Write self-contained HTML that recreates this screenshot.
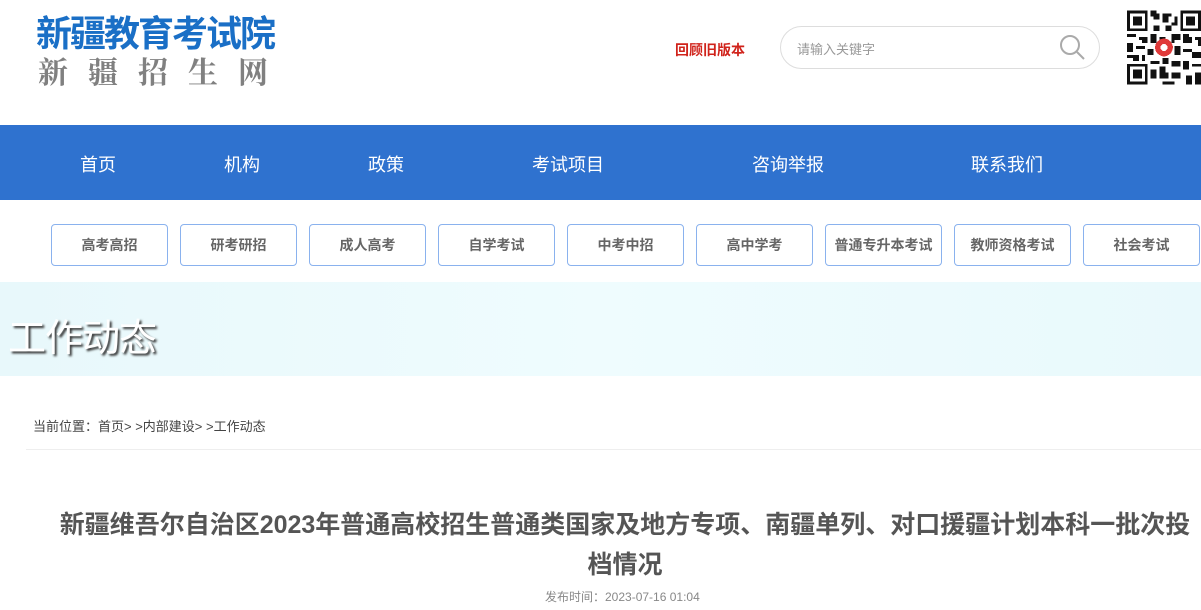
<!DOCTYPE html>
<html><head><meta charset="utf-8"><style>
body{margin:0;width:1201px;height:610px;overflow:hidden;background:#fff;font-family:"Liberation Sans","Noto Sans CJK SC",sans-serif;position:relative}
.a{position:absolute}
.nav{top:125px;left:0;width:1201px;height:75px;background:#2f72cf}
.nav span{position:absolute;top:26px;color:#fff;font-size:18px;transform:translateX(-50%);white-space:nowrap}
.btn{position:absolute;top:224px;width:115px;height:40px;border:1px solid #8ab2ee;border-radius:4px;text-align:center;line-height:40px;font-size:14px;color:#666;font-weight:bold}
</style></head><body>
<div class="a" style="left:36px;top:5px;font-size:36px;font-weight:bold;color:#1a6fc6;letter-spacing:-2px;white-space:nowrap">新疆教育考试院</div>
<div class="a" style="left:38px;top:48px;font-size:30px;color:#808080;font-family:'Noto Serif CJK SC',serif;font-weight:bold;letter-spacing:20px;white-space:nowrap">新疆招生网</div>
<div class="a" style="left:675px;top:40px;font-size:14px;color:#d0231b;font-weight:bold">回顾旧版本</div>
<div class="a" style="left:780px;top:26px;width:318px;height:41px;border:1px solid #ddd;border-radius:22px"></div>
<div class="a" style="left:797px;top:39px;font-size:13px;color:#999">请输入关键字</div>
<svg class="a" style="left:1058px;top:33px" width="28" height="28"><circle cx="12" cy="12" r="9" fill="none" stroke="#aaa" stroke-width="2"/><line x1="19" y1="19" x2="26" y2="26" stroke="#aaa" stroke-width="2"/></svg>
<svg class="a" style="left:1127px;top:10px" width="74" height="75" viewBox="0 0 25 25" shape-rendering="crispEdges">
<rect width="25" height="25" fill="#fff"/>
<g fill="#111">
<path d="M0 0h7v7h-7zM18 0h7v7h-7zM0 18h7v7h-7z"/>
</g>
<g fill="#fff"><path d="M1 1h5v5h-5zM19 1h5v5h-5zM1 19h5v5h-5z"/></g>
<g fill="#111"><path d="M2 2h3v3h-3zM20 2h3v3h-3zM2 20h3v3h-3z"/>
<path d="M8 0h2v1h1v2h-2v-1h-1zM12 1h3v1h-1v2h-2zM16 2h1v3h-2v-1h1zM9 5h2v2h-2zM13 5h2v2h-2zM0 8h3v1h-3zM4 9h3v2h-2v-1h-1zM8 8h2v3h-2zM11 9h2v1h-2zM15 8h3v2h-2v1h-1zM19 8h2v1h1v2h-3zM23 9h2v3h-1v-2h-1zM0 11h2v3h-2zM3 12h3v1h-3zM7 13h2v2h-2zM16 12h2v3h-2zM19 13h3v1h-3zM22 14h3v2h-3zM0 15h4v2h-2v-1h-2zM5 15h1v2h-1zM8 17h3v1h-3zM12 16h2v2h-2zM15 17h3v2h-3zM19 17h2v3h-2zM22 18h3v1h-3zM8 20h2v3h-2zM11 19h2v2h1v2h-3zM15 21h3v2h-3zM20 22h2v3h-2zM23 21h2v4h-2zM12 24h4v1h-4z"/></g>
<circle cx="12.5" cy="12.5" r="3" fill="#e03a3a"/><circle cx="12.5" cy="12.5" r="1.2" fill="#fff"/>
</svg>
<div class="a nav">
<span style="left:98px">首页</span><span style="left:242px">机构</span><span style="left:386px">政策</span><span style="left:568px">考试项目</span><span style="left:788px">咨询举报</span><span style="left:1007px">联系我们</span>
</div>
<div class="btn" style="left:51px">高考高招</div>
<div class="btn" style="left:180px">研考研招</div>
<div class="btn" style="left:309px">成人高考</div>
<div class="btn" style="left:438px">自学考试</div>
<div class="btn" style="left:567px">中考中招</div>
<div class="btn" style="left:696px">高中学考</div>
<div class="btn" style="left:825px">普通专升本考试</div>
<div class="btn" style="left:954px">教师资格考试</div>
<div class="btn" style="left:1083px">社会考试</div>
<div class="a" style="left:0;top:282px;width:1201px;height:94px;background:linear-gradient(90deg,#e8f8fb,#effcfe 50%,#e9f9fc)"></div>
<div class="a" style="left:8px;top:307px;font-size:38px;color:#fff;text-shadow:2px 2px 2px #333;letter-spacing:-1px">工作动态</div>
<div class="a" style="left:33px;top:416px;font-size:13px;color:#444;white-space:nowrap">当前位置：首页&gt; &gt;内部建设&gt; &gt;工作动态</div>
<div class="a" style="left:26px;top:449px;width:1175px;height:1px;background:#eee"></div>
<div class="a" style="left:50px;top:505px;width:1150px;text-align:center;font-size:25px;line-height:40px;font-weight:bold;color:#555">新疆维吾尔自治区2023年普通高校招生普通类国家及地方专项、南疆单列、对口援疆计划本科一批次投档情况</div>
<div class="a" style="left:545px;top:588px;font-size:12px;color:#888">发布时间：2023-07-16 01:04</div>
</body></html>
